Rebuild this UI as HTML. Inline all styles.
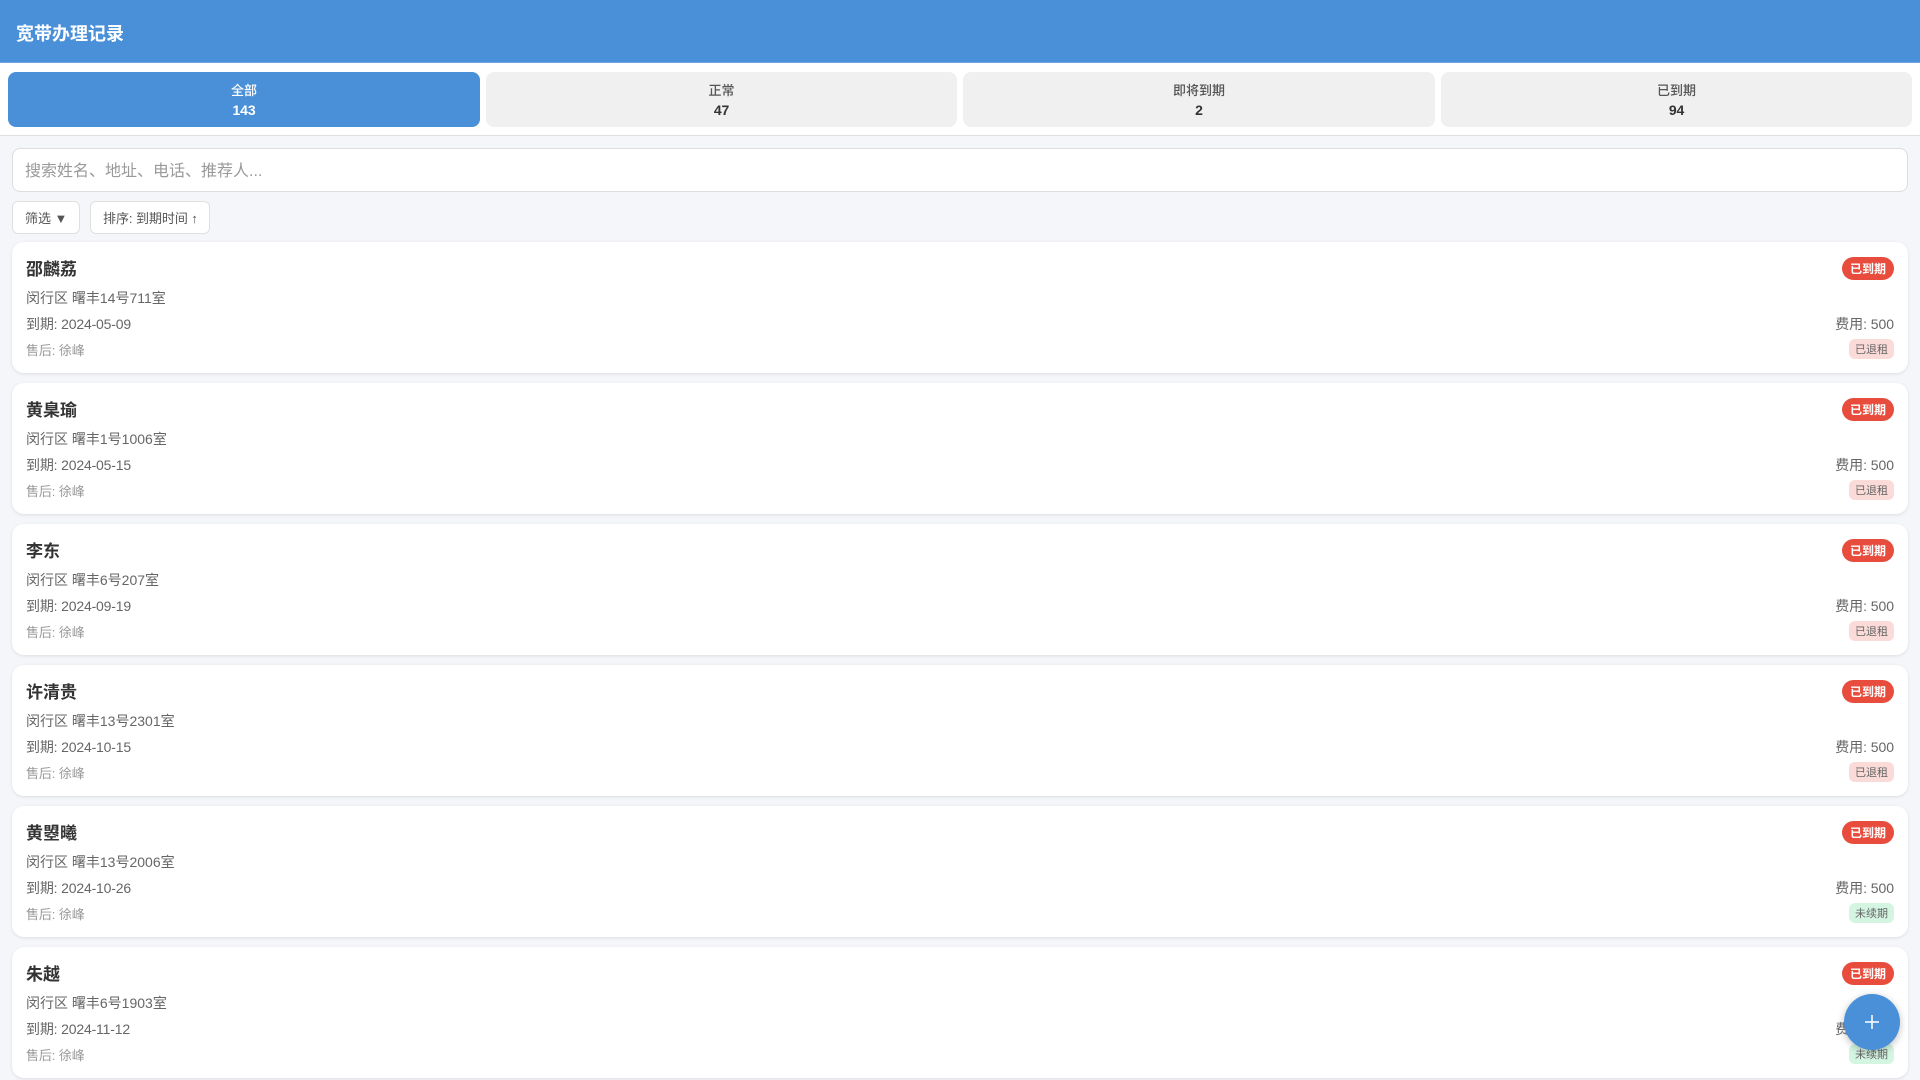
<!DOCTYPE html>
<html lang="zh"><head><meta charset="utf-8"><title>宽带办理记录</title>
<style>
*{box-sizing:border-box;margin:0;padding:0}
html,body{width:1920px;height:1080px;overflow:hidden;background:#f4f6f9;font-family:"Liberation Sans","Noto Sans CJK SC",sans-serif;color:#333}
.a{position:absolute;white-space:nowrap}
.hd{left:0;top:0;width:1920px;height:63px;background:#4a90d9;color:#fff;font-size:18px;font-weight:700;line-height:69px;padding-left:16px;border-bottom:1px solid #6fa6e0}
.bar{left:0;top:63px;width:1920px;height:73px;background:#fff;border-bottom:1px solid #e0e0e0}
.tab{top:72px;height:55px;width:472px;border-radius:8px;background:#f0f0f0;color:#555;text-align:center;font-size:13px;font-weight:500;padding-top:9px;line-height:19px}
.tab b{display:block;font-size:14px;color:#333;margin-top:1px;letter-spacing:-.1px}
.tab.on{background:#4a90d9;color:#fff}.tab.on b{color:#fff}
.search{left:12px;top:148px;width:1896px;height:44px;background:#fff;border:1px solid #ddd;border-radius:8px;font-size:16px;line-height:46px;padding-left:12px;color:#9a9a9a}
.btn{top:201px;height:33px;background:#fff;border:1px solid #e0e0e0;border-radius:6px;font-size:13px;line-height:33px;padding-left:12px;color:#555;letter-spacing:-.05px}
.card{left:12px;width:1896px;height:131px;background:#fff;border-radius:12px;box-shadow:0 1px 3px rgba(0,0,0,.1)}
.n{left:14px;top:16px;font-size:17px;font-weight:700;line-height:24px;color:#333}
.l1{left:14px;top:46px;font-size:14px;line-height:20px;color:#666}
.l2{left:14px;top:72px;font-size:14px;line-height:20px;color:#666;letter-spacing:-.17px}
.l3{left:14px;top:99px;font-size:13px;line-height:20px;color:#999;letter-spacing:-.1px}
.st{right:14px;top:15px;height:23px;width:52px;border-radius:12px;background:#e74c3c;color:#fff;font-size:12px;font-weight:700;line-height:24px;text-align:center}
.fee{right:14px;top:72px;font-size:14px;line-height:20px;color:#666;letter-spacing:-.05px}
.tag{right:14px;top:97px;height:20px;width:45px;border-radius:6px;font-size:11px;line-height:22px;text-align:center;color:#666}
.r{background:#fadbd8}.g{background:#d5f5e3}
.fab{left:1844px;top:994px;width:56px;height:56px;border-radius:50%;background:#4a90d9;box-shadow:0 2px 8px rgba(0,0,0,.25)}
.fab svg{position:absolute;left:0;top:0}
</style></head><body>
<div class="a hd">宽带办理记录</div>
<div class="a bar"></div>
<div class="a tab on" style="left:8px">全部<b>143</b></div>
<div class="a tab" style="left:486px;width:471px">正常<b>47</b></div>
<div class="a tab" style="left:963px">即将到期<b>2</b></div>
<div class="a tab" style="left:1441px;width:471px">已到期<b>94</b></div>
<div class="a search">搜索姓名、地址、电话、推荐人...</div>
<div class="a btn" style="left:12px;width:68px">筛选 ▼</div>
<div class="a btn" style="left:90px;width:120px">排序: 到期时间 ↑</div>

<div class="a card" style="top:242px"><div class="a n">邵麟荔</div><div class="a l1">闵行区 曙丰14号711室</div><div class="a l2">到期: 2024-05-09</div><div class="a l3">售后: 徐峰</div><div class="a st">已到期</div><div class="a fee">费用: 500</div><div class="a tag r">已退租</div></div>
<div class="a card" style="top:383px"><div class="a n">黄臬瑜</div><div class="a l1">闵行区 曙丰1号1006室</div><div class="a l2">到期: 2024-05-15</div><div class="a l3">售后: 徐峰</div><div class="a st">已到期</div><div class="a fee">费用: 500</div><div class="a tag r">已退租</div></div>
<div class="a card" style="top:524px"><div class="a n">李东</div><div class="a l1">闵行区 曙丰6号207室</div><div class="a l2">到期: 2024-09-19</div><div class="a l3">售后: 徐峰</div><div class="a st">已到期</div><div class="a fee">费用: 500</div><div class="a tag r">已退租</div></div>
<div class="a card" style="top:665px"><div class="a n">许清贵</div><div class="a l1">闵行区 曙丰13号2301室</div><div class="a l2">到期: 2024-10-15</div><div class="a l3">售后: 徐峰</div><div class="a st">已到期</div><div class="a fee">费用: 500</div><div class="a tag r">已退租</div></div>
<div class="a card" style="top:806px"><div class="a n">黄曌曦</div><div class="a l1">闵行区 曙丰13号2006室</div><div class="a l2">到期: 2024-10-26</div><div class="a l3">售后: 徐峰</div><div class="a st">已到期</div><div class="a fee">费用: 500</div><div class="a tag g">未续期</div></div>
<div class="a card" style="top:947px"><div class="a n">朱越</div><div class="a l1">闵行区 曙丰6号1903室</div><div class="a l2">到期: 2024-11-12</div><div class="a l3">售后: 徐峰</div><div class="a st">已到期</div><div class="a fee">费用: 500</div><div class="a tag g">未续期</div></div>
<div class="a fab"><svg width="56" height="56" viewBox="0 0 56 56"><path d="M21 28H35M28 21V35" stroke="#fff" stroke-width="1.5" fill="none"/></svg></div>
</body></html>
